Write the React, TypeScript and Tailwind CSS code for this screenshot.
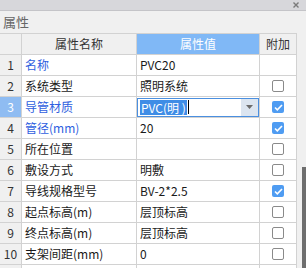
import React from 'react'

type Row = {
  no: number
  name: string
  value?: string
  blue?: boolean
  check?: 'on' | 'off'
  dropdown?: boolean
}

const rows: Row[] = [
  { no: 1, name: '名称', value: 'PVC20', blue: true },
  { no: 2, name: '系统类型', value: '照明系统', check: 'off' },
  { no: 3, name: '导管材质', blue: true, check: 'on', dropdown: true },
  { no: 4, name: '管径(mm)', value: '20', blue: true, check: 'on' },
  { no: 5, name: '所在位置', value: '', check: 'off' },
  { no: 6, name: '敷设方式', value: '明敷', check: 'off' },
  { no: 7, name: '导线规格型号', value: 'BV-2*2.5', check: 'on' },
  { no: 8, name: '起点标高(m)', value: '层顶标高', check: 'off' },
  { no: 9, name: '终点标高(m)', value: '层顶标高', check: 'off' },
  { no: 10, name: '支架间距(mm)', value: '0', check: 'off' },
]

export default function App() {
  return (
    <div
      className="w-[306px] h-[268px] overflow-hidden bg-[#f0f0f0] text-[12px] text-[#1a1a1a] flex flex-col"
      style={{ fontFamily: '"Noto Sans CJK SC", "Noto Sans", sans-serif' }}
    >
      <div className="h-[11px] shrink-0 bg-[#d7d7db] border-b border-[#c4c4c8] flex items-center justify-end pr-[7px]">
        {/* close */}
        <svg width="6" height="6" viewBox="0 0 6 6">
          <path d="M0.5 0.5l5 5M5.5 0.5l-5 5" stroke="#7a7a7a" strokeWidth="1.4" />
        </svg>
      </div>
      <div className="h-[22px] shrink-0 flex items-center pl-[3px] text-[13px] text-[#666]">属性</div>
      <div className="flex flex-1 min-h-0">
        <div className="w-[297px] shrink-0 flex flex-col border-t border-[#d2d2d2]">
          <div className="flex h-[21px] shrink-0 border-b border-[#d2d2d2]">
            <div className="w-[22px] shrink-0 border-r border-[#d2d2d2] bg-[#f0f0f0]" />
            <div className="w-[115px] shrink-0 border-r border-[#d2d2d2] bg-[#f0f0f0] flex items-center justify-center text-[#333]">属性名称</div>
            <div className="w-[123px] shrink-0 border-r border-[#d2d2d2] bg-[#80b8f6] flex items-center justify-center text-white">属性值</div>
            <div className="w-[37px] shrink-0 border-r border-[#d2d2d2] bg-[#f0f0f0] flex items-center justify-center text-[#333]">附加</div>
          </div>
          {rows.map((r) => (
            <div key={r.no} className="flex h-[21px] shrink-0 border-b border-[#d2d2d2] bg-white">
              <div
                className={
                  r.dropdown
                    ? 'w-[22px] shrink-0 border-r border-[#d2d2d2] bg-[#8fbcf2] text-white flex items-center justify-center'
                    : 'w-[22px] shrink-0 border-r border-[#d2d2d2] bg-[#f0f0f0] text-[#333] flex items-center justify-center'
                }
              >
                {r.no}
              </div>
              <div
                className={
                  r.blue
                    ? 'w-[115px] shrink-0 border-r border-[#d2d2d2] flex items-center pl-[3px] text-[#2f5fe0]'
                    : 'w-[115px] shrink-0 border-r border-[#d2d2d2] flex items-center pl-[3px]'
                }
              >
                {r.name}
              </div>
              <div className="w-[123px] shrink-0 border-r border-[#d2d2d2] flex items-center pl-[3px]">
                {r.dropdown ? <Dropdown /> : r.value}
              </div>
              <div className="w-[37px] shrink-0 border-r border-[#d2d2d2] flex items-center justify-center">
                {r.check && <Check on={r.check === 'on'} />}
              </div>
            </div>
          ))}
          <div className="flex h-[21px] shrink-0 bg-white">
            <div className="w-[22px] shrink-0 border-r border-[#d2d2d2] bg-[#f0f0f0]" />
            <div className="w-[115px] shrink-0 border-r border-[#d2d2d2]" />
            <div className="w-[123px] shrink-0 border-r border-[#d2d2d2]" />
            <div className="w-[37px] shrink-0 border-r border-[#d2d2d2]" />
          </div>
        </div>
        <div className="flex-1 flex flex-col items-end bg-[#f0f0f0]">
          <div className="h-[134px] shrink-0" />
          <div className="w-[4px] flex-1 bg-[#6e6e6e]" />
        </div>
      </div>
    </div>
  )
}

function Dropdown() {
  return (
    <div className="-ml-[3px] w-[123px] h-[19px] border border-[#4a8fe0] bg-white flex items-center">
      <div className="flex-1 flex items-center pl-[2px]">
        <span className="bg-[#3f8de6] text-white leading-[15px] px-[1px]">PVC(明 )</span>
        <span className="w-[1px] h-[14px] bg-black ml-[1px]" />
      </div>
      <div className="w-[17px] h-full bg-[#dce5f0] flex items-center justify-center">
        <svg width="7" height="4" viewBox="0 0 7 4">
          <path d="M0 0h7L3.5 4z" fill="#6b6b6b" />
        </svg>
      </div>
    </div>
  )
}

function Check({ on }: { on: boolean }) {
  if (on) {
    return (
      <div className="w-[12px] h-[12px] rounded-[2px] bg-[#4f9cf2] flex items-center justify-center">
        <svg width="9" height="7" viewBox="0 0 9 7">
          <path d="M1 3.5l2.3 2.3L8 1" stroke="white" strokeWidth="1.6" fill="none" />
        </svg>
      </div>
    )
  }
  return <div className="w-[12px] h-[12px] rounded-[2px] border border-[#8a8a8a] bg-white" />
}
